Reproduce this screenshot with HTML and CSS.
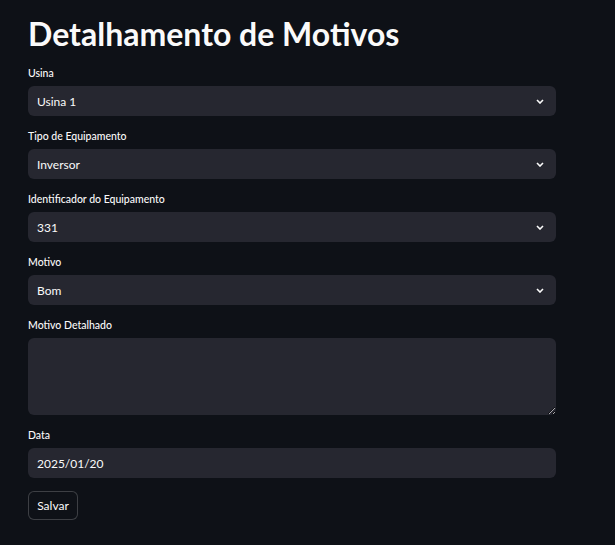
FILE: index.html
```html
<!DOCTYPE html>
<html lang="pt">
<head>
<meta charset="utf-8">
<link rel="stylesheet" href="styles.css">
</head>
<body>
<main class="page">
  <h1 class="title">Detalhamento de Motivos</h1>
  <div class="field">
    <label class="label">Usina</label>
    <div class="select"><span>Usina 1</span><svg class="chev" viewBox="0 0 8 5" width="8" height="5"><path d="M1 1l3 3 3-3" fill="none" stroke="#fafafa" stroke-width="1.6"/></svg></div>
  </div>
  <div class="field">
    <label class="label">Tipo de Equipamento</label>
    <div class="select"><span>Inversor</span><svg class="chev" viewBox="0 0 8 5" width="8" height="5"><path d="M1 1l3 3 3-3" fill="none" stroke="#fafafa" stroke-width="1.6"/></svg></div>
  </div>
  <div class="field">
    <label class="label">Identificador do Equipamento</label>
    <div class="select"><span>331</span><svg class="chev" viewBox="0 0 8 5" width="8" height="5"><path d="M1 1l3 3 3-3" fill="none" stroke="#fafafa" stroke-width="1.6"/></svg></div>
  </div>
  <div class="field">
    <label class="label">Motivo</label>
    <div class="select"><span>Bom</span><svg class="chev" viewBox="0 0 8 5" width="8" height="5"><path d="M1 1l3 3 3-3" fill="none" stroke="#fafafa" stroke-width="1.6"/></svg></div>
  </div>
  <div class="field">
    <label class="label">Motivo Detalhado</label>
    <textarea class="textarea"></textarea>
  </div>
  <div class="field">
    <label class="label">Data</label>
    <div class="input">2025/01/20</div>
  </div>
  <button class="btn">Salvar</button>
</main>
</body>
</html>
```
FILE: styles.css
```css
* { box-sizing: border-box; }
html, body { margin: 0; height: 100%; }
body {
  background: #0e1117;
  color: #fafafa;
  font-family: "Lato", "Noto Sans", sans-serif;
}
.page {
  width: 528px;
  margin-left: 28px;
  padding-top: 14px;
  display: flex;
  flex-direction: column;
}
.title {
  margin: 0 0 13px 0;
  font-size: 32px;
  font-weight: 700;
  line-height: 40px;
  letter-spacing: 0;
}
.field {
  display: flex;
  flex-direction: column;
  margin-bottom: 14px;
}
.label {
  font-size: 10.5px;
  line-height: 13px;
  margin-bottom: 6px;
  font-weight: 500;
}
.select, .input {
  height: 30px;
  background: #262730;
  border-radius: 6px;
  display: flex;
  align-items: center;
  justify-content: space-between;
  padding: 0 12px 0 9px;
  font-size: 12px;
}
.chev { display: block; }
.textarea {
  height: 77px;
  background: #262730;
  border: none;
  border-radius: 6px;
  resize: vertical;
  width: 100%;
  color: #fafafa;
  margin: 0;
  display: block;
}
.btn {
  align-self: flex-start;
  width: 50px;
  height: 29px;
  margin-top: -1px;
  background: #0e1117;
  color: #fafafa;
  border: 1px solid rgba(250,250,250,0.2);
  border-radius: 6px;
  font-family: inherit;
  font-size: 12px;
  padding: 0;
}
```
